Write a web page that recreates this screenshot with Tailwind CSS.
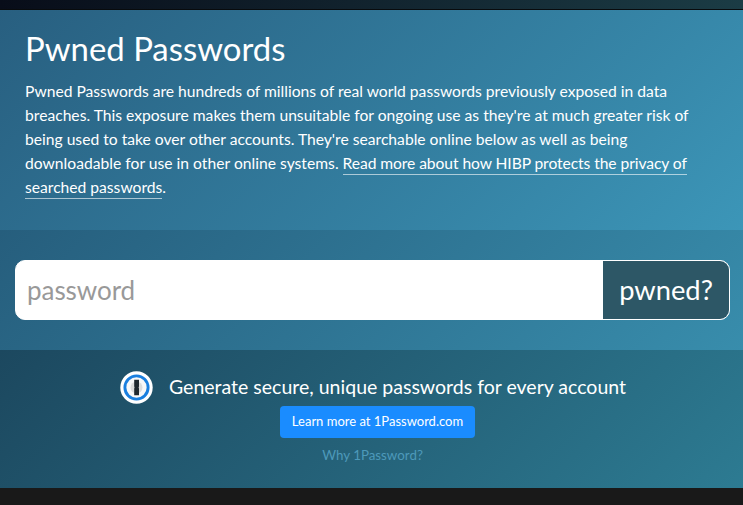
<!DOCTYPE html>
<html lang="en">
<head>
	<meta charset="utf-8">
	<meta name="viewport" content="width=device-width, initial-scale=1">
	<title>Pwned Passwords</title>
	<script src="https://cdn.jsdelivr.net/npm/@tailwindcss/browser@4"></script>
</head>
<body class="h-screen overflow-hidden flex flex-col bg-[#191919] font-['Lato','Noto_Sans',sans-serif] text-white">
	<nav class="h-[10px] shrink-0 border-b border-[#080b0d] bg-linear-to-r from-[#080d19] to-[#1b3c45]"></nav>

	<header class="h-[220px] shrink-0 px-[25px] pt-[19px] bg-linear-135 from-[#285f80] to-[#3c96b8]">
		<h1 class="w-fit text-[32.9px] leading-[40px] whitespace-nowrap">Pwned Passwords</h1>
		<p class="mt-[10px] text-[15.63px] leading-6 whitespace-nowrap">
			<span>Pwned Passwords are hundreds of millions of real world passwords previously exposed in data</span><br>
			<span class="tracking-[0.01px]">breaches. This exposure makes them unsuitable for ongoing use as they're at much greater risk of</span><br>
			<span class="tracking-[0.01px]">being used to take over other accounts. They're searchable online below as well as being</span><br>
			<span class="tracking-[0.02px]">downloadable for use in other online systems. <a href="#" class="pb-[2px] border-b border-white/60 tracking-[-0.08px]">Read more about how HIBP protects the privacy of</a></span><br>
			<span><a href="#" class="pb-[2px] border-b border-white/60">searched passwords</a>.</span>
		</p>
	</header>

	<section class="h-[120px] shrink-0 pl-[15px] pr-[13px] py-[30px] bg-linear-135 from-[#265e7d] to-[#388dac]">
		<form class="flex h-[60px] rounded-[10px] border border-white bg-white overflow-hidden">
			<input type="text" placeholder="password" class="grow min-w-0 px-[11px] text-[26px] tracking-[-0.05px] text-[#555] placeholder:text-[#999]">
			<button type="button" class="w-[126px] bg-[#2d5766] text-[27.3px]">pwned?</button>
		</form>
	</section>

	<section class="h-[138px] shrink-0 flex flex-col items-center pt-[20px] bg-linear-135 from-[#1c485f] to-[#2d7b92]">
		<div class="flex items-center gap-[16px] h-[34px] ml-[3px] whitespace-nowrap">
			<svg class="w-[33px] h-[33px]" viewBox="0 0 33 33">
				<circle cx="16.5" cy="16.5" r="16.2" fill="#fff"/>
				<circle cx="16.5" cy="16.5" r="11.6" fill="#f8f8f8" stroke="#1a7fdf" stroke-width="2.9"/>
				<circle cx="16.5" cy="16.5" r="6" fill="#dcdcdc"/>
				<path d="M14.2 8.8h4.8v6.8l-.4.9.4.9v6.8h-4.8v-6.8l.4-.9-.4-.9z" fill="#20282e"/>
			</svg>
			<span class="pb-px text-[19.53px]">Generate secure, unique passwords for every account</span>
		</div>
		<a href="#" class="mt-[2px] ml-[12px] w-[195px] h-[32px] flex items-center justify-center rounded-[4px] bg-[#1a8cff] text-[13px] whitespace-nowrap">Learn more at 1Password.com</a>
		<a href="#" class="mt-[7px] ml-[2px] text-[13.35px] leading-[20px] text-[#4d99ba] whitespace-nowrap">Why 1Password?</a>
	</section>
</body>
</html>
